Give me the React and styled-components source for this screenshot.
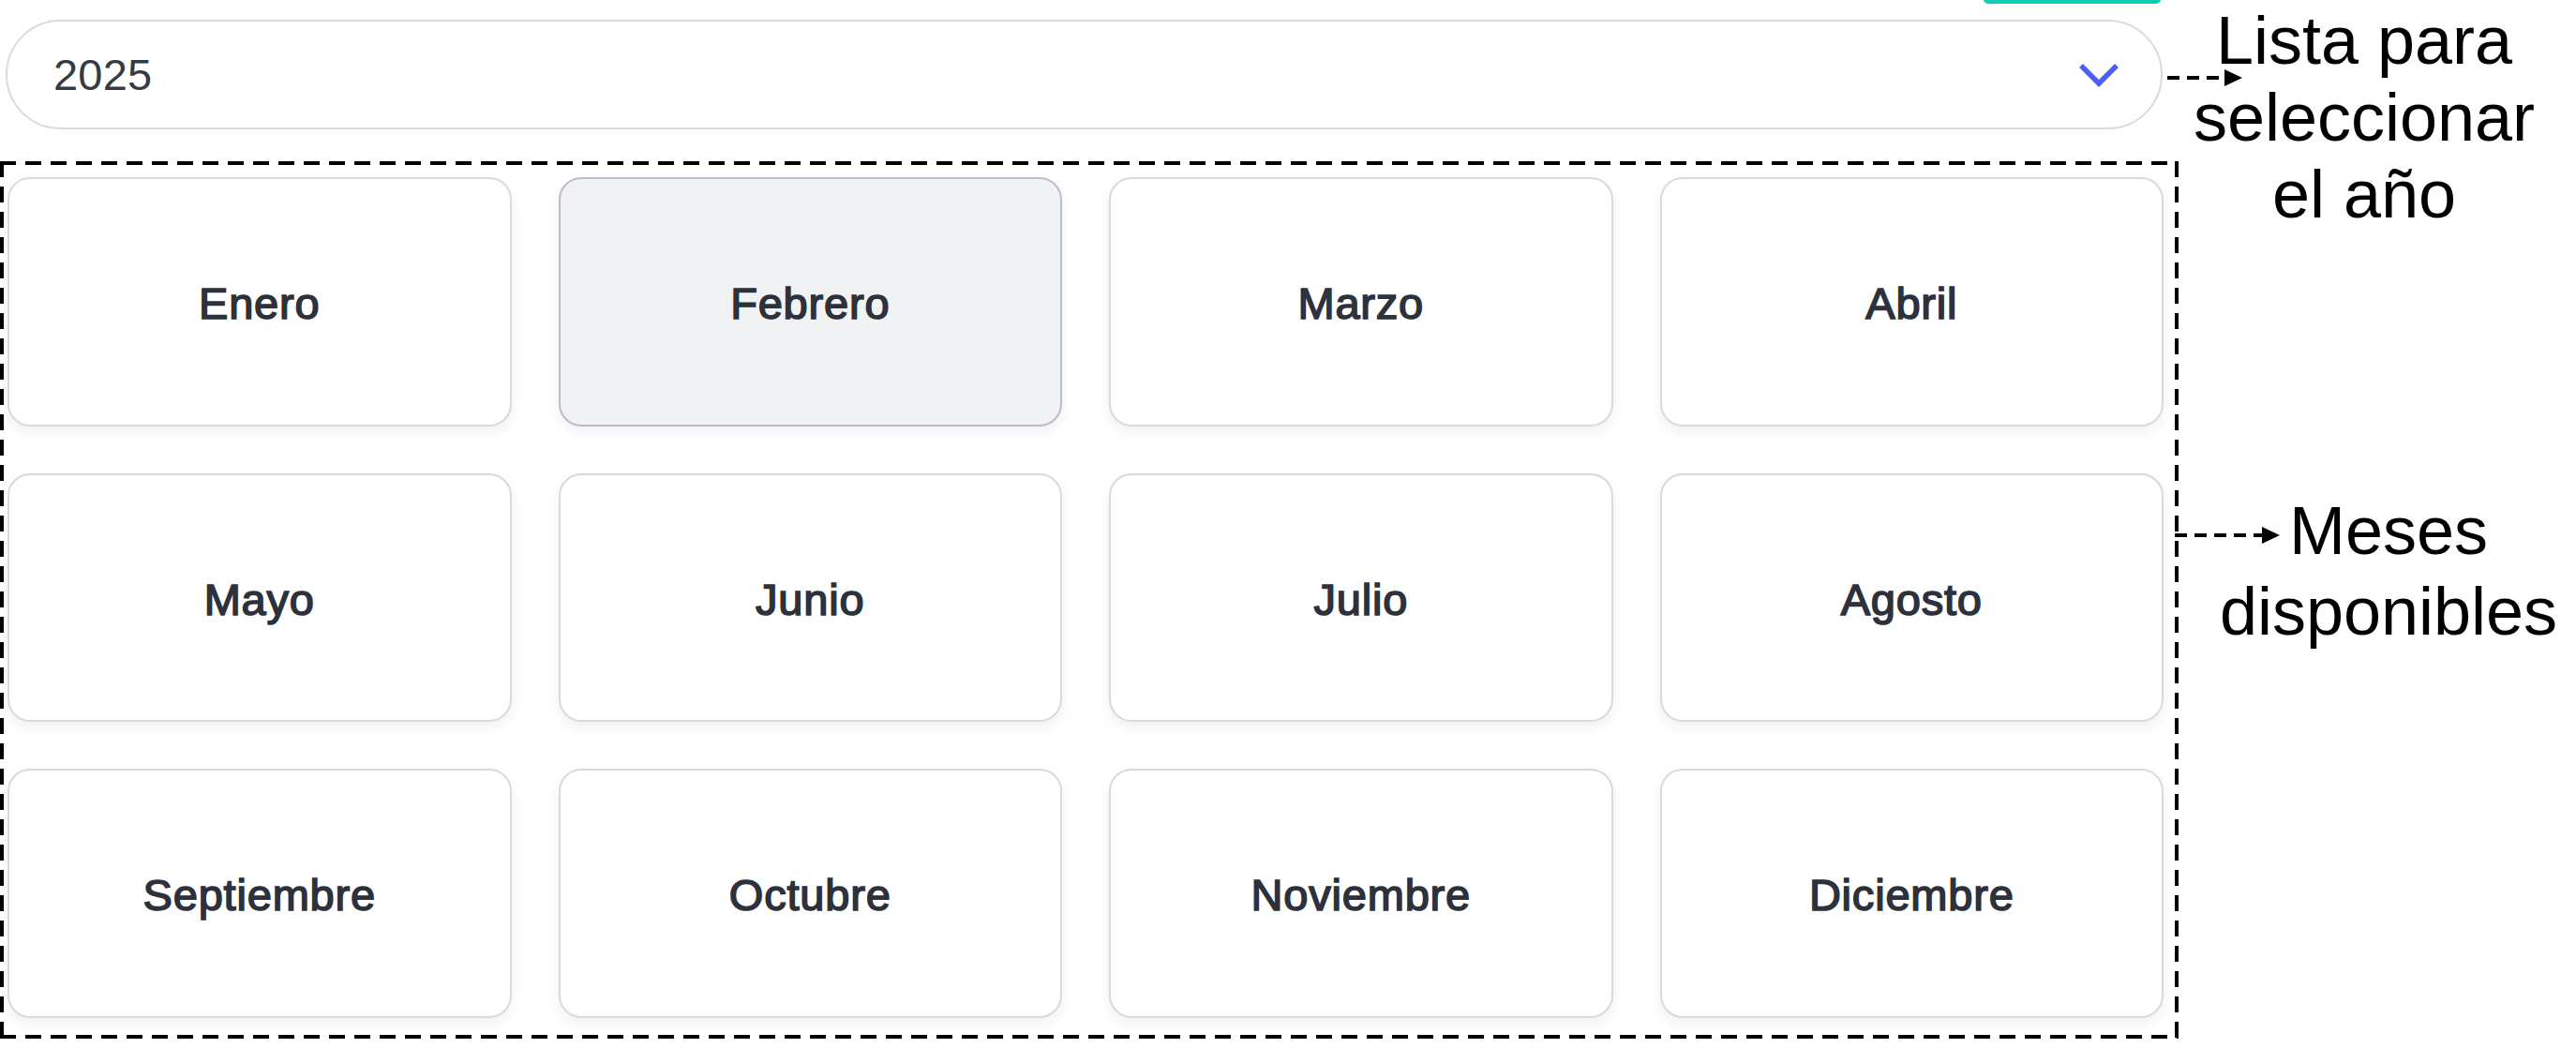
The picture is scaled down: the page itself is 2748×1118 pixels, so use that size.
import React from 'react';
import styled, { createGlobalStyle } from 'styled-components';

const months = [
    'Enero', 'Febrero', 'Marzo', 'Abril',
    'Mayo', 'Junio', 'Julio', 'Agosto',
    'Septiembre', 'Octubre', 'Noviembre', 'Diciembre'
];

const GlobalStyle = createGlobalStyle`
    html, body {
        margin: 0;
        padding: 0;
        background: #ffffff;
    }
    body {
        font-family: "Liberation Sans", Arial, sans-serif;
    }
`;

const Page = styled.div`
    display: flex;
    align-items: flex-start;
    width: 2748px;
    height: 1118px;
    overflow: hidden;
`;

const LeftColumn = styled.div`
    display: flex;
    flex-direction: column;
    width: 2324px;
    flex-shrink: 0;
`;

const TabStrip = styled.div`
    display: flex;
    justify-content: flex-end;
    height: 4px;
    padding-right: 19px;
`;

const TealTab = styled.div`
    width: 189px;
    height: 4px;
    background: #11cdb3;
    border-radius: 0 0 6px 6px / 0 0 4px 4px;
`;

const YearSelect = styled.div`
    display: flex;
    align-items: center;
    justify-content: space-between;
    box-sizing: border-box;
    height: 117px;
    margin: 17px 17px 0 6px;
    padding: 0 44px 0 49px;
    background: #ffffff;
    border: 2px solid #d8dadf;
    border-radius: 60px;
`;

const YearValue = styled.span`
    font-size: 47px;
    color: #353a43;
    letter-spacing: 0.2px;
`;

const Chevron = styled.svg`
    width: 44px;
    height: 26px;
    display: block;
`;

const dash = (angle) =>
    `repeating-linear-gradient(${angle}, #000 0 17px, transparent 17px 27px)`;

const MonthsFrame = styled.div`
    box-sizing: border-box;
    margin-top: 34px;
    height: 936px;
    padding: 17px 16px 22px 8px;
    background:
        ${dash('90deg')} top left / 100% 4px no-repeat,
        ${dash('90deg')} bottom left / 100% 4px no-repeat,
        ${dash('180deg')} top left / 4px 100% no-repeat,
        ${dash('180deg')} top right / 4px 100% no-repeat;
`;

const MonthGrid = styled.div`
    display: grid;
    grid-template-columns: repeat(4, 1fr);
    grid-auto-rows: 265.6px;
    gap: 50px;
    height: 100%;
`;

const MonthCard = styled.div`
    display: flex;
    align-items: center;
    justify-content: center;
    padding-top: 4px;
    border-radius: 24px;
    border: 2px solid ${p => (p.$selected ? '#babecb' : '#d7dadf')};
    background: ${p => (p.$selected ? '#f1f2f4' : '#ffffff')};
    box-shadow: 0 6px 14px rgba(17, 24, 39, 0.06);
    font-size: 47px;
    font-weight: 400;
    color: #2d313b;
    -webkit-text-stroke: 1.6px #2d313b;
    letter-spacing: 0.8px;
    cursor: pointer;
`;

const NotesColumn = styled.div`
    display: flex;
    flex-direction: column;
    flex: 1;
`;

const Note = styled.div`
    position: relative;
    margin-top: ${p => p.$top}px;
    padding: 0 ${p => p.$padRight || 0}px 0 ${p => p.$padLeft || 0}px;
    font-size: 72px;
    line-height: ${p => p.$lineHeight}px;
    color: #000000;
    text-align: center;
    white-space: nowrap;
`;

const Arrow = styled.svg`
    position: absolute;
    left: ${p => p.$left}px;
    top: ${p => p.$y}px;
    height: 20px;
    overflow: visible;
`;

const DashedArrow = ({ width, left, y }) => (
    <Arrow $left={left} $y={y} width={width} viewBox={`0 0 ${width} 20`}>
        <line x1="0" y1="10" x2={width - 18} y2="10"
            stroke="#000" strokeWidth="4" strokeDasharray="13 8" />
        <polygon points={`${width - 19},1 ${width},10 ${width - 19},19`} fill="#000" />
    </Arrow>
);

const App = () => {
    return (
        <>
            <GlobalStyle />
            <Page>
                <LeftColumn>
                    <TabStrip>
                        <TealTab />
                    </TabStrip>
                    <YearSelect>
                        <YearValue>2025</YearValue>
                        <Chevron viewBox="0 0 44 26">
                            <polyline points="3,3 22,22 41,3" fill="none"
                                stroke="#4b5ef6" strokeWidth="5.5" />
                        </Chevron>
                    </YearSelect>
                    <MonthsFrame>
                        <MonthGrid>
                            {months.map(name => (
                                <MonthCard key={name} $selected={name === 'Febrero'}>
                                    {name}
                                </MonthCard>
                            ))}
                        </MonthGrid>
                    </MonthsFrame>
                </LeftColumn>
                <NotesColumn>
                    <Note $top={2} $lineHeight={82} $padRight={28}>
                        <DashedArrow width={80} left={-12} y={71} />
                        Lista para<br />seleccionar<br />el año
                    </Note>
                    <Note $top={275} $lineHeight={86} $padLeft={24}>
                        <DashedArrow width={112} left={-4} y={38} />
                        Meses<br />disponibles
                    </Note>
                </NotesColumn>
            </Page>
        </>
    );
};

export default App;
